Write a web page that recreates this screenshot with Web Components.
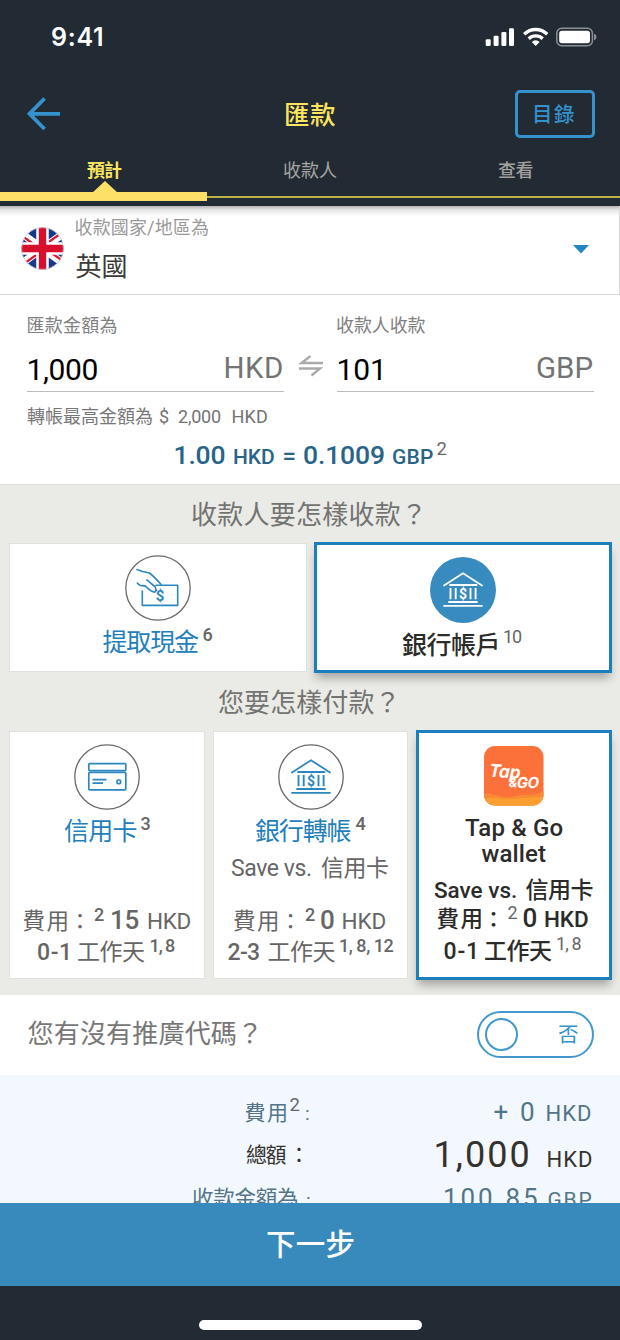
<!DOCTYPE html>
<html lang="zh-Hant">
<head>
<meta charset="utf-8">
<title>匯款</title>
<style>
html,body{margin:0;padding:0;background:#222a33}
body{width:620px;height:1340px;overflow:hidden;font-family:Roboto,"Noto Sans CJK TC",sans-serif}
</style>
</head>
<body>
<remit-app></remit-app>
<script>
const FAMILY = 'Roboto,"Noto Sans CJK TC",sans-serif';
const define = (name, html) => customElements.define(name, class extends HTMLElement {
  constructor() {
    super();
    const t = document.createElement('template');
    t.innerHTML = html;
    this.attachShadow({mode: 'open'}).append(t.content.cloneNode(true));
  }
});
const pen = document.createElement('canvas').getContext('2d');

/* Text run whose box hugs its ink: s = size, w = ink width, g = gap before, up = raise, wt = weight, c = colour */
customElements.define('ui-text', class extends HTMLElement {
  connectedCallback() {
    if (this.shadowRoot) return;
    const a = (n, d) => this.hasAttribute(n) ? this.getAttribute(n) : d;
    const s = +a('s', 18), w = +a('w', 0), wt = a('wt', 400), fam = a('f', FAMILY);
    const text = this.textContent;
    pen.font = `${wt} ${s}px ${fam}`;
    const m = pen.measureText(text);
    const ink = m.actualBoundingBoxRight + m.actualBoundingBoxLeft;
    const n = [...text].length;
    const ls = w && n > 1 ? (w - ink) / (n - 1) : 0;
    this.attachShadow({mode: 'open'}).innerHTML = `<style>
      :host{display:block;flex:none;width:${w || ink}px;margin-left:${a('g', 0)}px;font:${wt} ${s}px/1 ${fam};color:${a('c', 'inherit')};white-space:pre}
      span{margin-left:${m.actualBoundingBoxLeft}px;letter-spacing:${ls}px;vertical-align:${a('up', 0)}px}
      </style><span><slot></slot></span>`;
  }
});

/* Row with a fixed baseline: h = height, b = baseline from the top, p = left inset */
customElements.define('ui-row', class extends HTMLElement {
  connectedCallback() {
    if (this.shadowRoot) return;
    const a = n => this.getAttribute(n) || 0;
    this.attachShadow({mode: 'open'}).innerHTML = `<style>
      :host{display:flex;align-items:baseline;box-sizing:border-box;flex:none;height:${a('h')}px;padding-left:${a('p')}px}
      i{width:0;height:${a('b')}px;flex:none}</style><i></i><slot></slot>`;
  }
});

define('status-bar', `<style>:host{display:flex;height:76px}ui-row{width:485px}svg{margin-top:27px}</style>
<ui-row h="76" b="46" p="52"><ui-text s="25" w="50" wt="600" f="Inter,sans-serif" c="#fff">9:41</ui-text></ui-row>
<svg width="113" height="20" viewBox="0 0 113 20" fill="#fff">
<rect x=".7" y="12.3" width="5" height="6.7" rx="1.2"/><rect x="8.6" y="8.7" width="5" height="10.3" rx="1.2"/><rect x="16.4" y="5" width="5" height="14" rx="1.2"/><rect x="24" y="1.2" width="5" height="17.8" rx="1.2"/>
<g fill="none" stroke="#fff" stroke-width="3.3"><path d="M39.2 7.2a16.4 16.4 0 0 1 23 0"/><path d="M43.7 11.8a10 10 0 0 1 14 0"/></g><path d="M46.8 14.9a5.6 5.6 0 0 1 7.8 0L50.7 19z"/>
<rect x="71.8" y="1.3" width="35.6" height="17.4" rx="5" fill="none" stroke="#8b9096" stroke-width="1.5"/><rect x="74.2" y="3.7" width="30.8" height="12.6" rx="2.8"/><path d="M109 6.8c3.2 1 3.2 5.400 0 6.500z" fill="#8b9096"/></svg>`);

define('nav-bar', `<style>:host{display:flex;height:76px}svg{margin:21px 0 0 26px}.t{width:474px}.m{margin:14px 0 0 -20.500px;box-sizing:border-box;width:80px;height:48px;border:3px solid #3592cc;border-radius:5px}</style>
<svg width="35" height="34" viewBox="0 0 35 34" fill="none" stroke="#3592cc" stroke-width="3.8"><path d="M34 16.800H4M18.600 1.500L3.500 16.800l15.100 15.200"/></svg>
<ui-row class="t" h="76" b="47.500" p="225"><ui-text s="25.500" w="49" wt="500" c="#fbe45f">匯款</ui-text></ui-row>
<div class="m"><ui-row h="42" b="29" p="17.500"><ui-text s="20.500" w="39" wt="500" c="#3592cc">目錄</ui-text></ui-row></div>`);

define('tab-strip', `<style>:host{display:block;height:54px}.l{display:flex;height:29px}.l ui-row{width:206px}
.tri{height:11px;padding-left:92px;display:block}.b{height:9px;display:flex;align-items:flex-start}.b i{width:207px;height:9px;background:#fde067}.b b{flex:1;height:2px;margin-top:4px;background:#bfb449}</style>
<div class="l"><ui-row h="29" b="25" p="87"><ui-text w="35" wt="600" c="#fbe45f">預計</ui-text></ui-row><ui-row h="29" b="25" p="78"><ui-text w="53" c="#a6a6a4">收款人</ui-text></ui-row><ui-row h="29" b="25" p="86"><ui-text w="34.500" wt="500" c="#a0a09e">查看</ui-text></ui-row></div>
<svg class="tri" width="26" height="11" viewBox="0 0 26 11"><path d="M0 12L13 0l13 12z" fill="#fde067"/></svg>
<div class="b"><i></i><b></b></div>`);

define('uk-flag', `<style>:host{display:block;width:43px;height:43px}svg{display:block}</style>
<svg width="43" height="43" viewBox="-21.500 -21.500 43 43"><clipPath id="c"><circle r="21"/></clipPath><g clip-path="url(#c)">
<rect x="-22" y="-22" width="44" height="44" fill="#143a8c"/>
<path d="M-26-18.500L26 18.500M26-18.500L-26 18.500" stroke="#fff" stroke-width="7.500"/>
<path d="M-26-16.500L0 2M26-20.500L0-2M26 16.500L0-2M-26 20.500L0 2" stroke="#dc1730" stroke-width="2.300"/>
<path d="M0-22V22M-22 0H22" stroke="#fff" stroke-width="12.500"/><path d="M0-22V22M-22 0H22" stroke="#d80f2c" stroke-width="7.400"/></g><circle r="20.800" fill="none" stroke="#d5d5dd" stroke-width=".6"/></svg>`);

define('country-select', `<style>:host{display:flex;box-sizing:border-box;height:89px;border-bottom:1.500px solid #d8d8d8;border-right:1px solid #d8d8d8;background:linear-gradient(#b5b3b5,#e6e6e6 4px,#fff 10px)}
uk-flag{margin:21px 0 0 20.500px}.t{flex:1;padding-left:12px}svg{margin:39px 30px 0 0}</style>
<uk-flag></uk-flag><div class="t"><ui-row h="34" b="28"><ui-text w="132.500" c="#999">收款國家/地區為</ui-text></ui-row><ui-row h="50" b="36"><ui-text s="26" w="50" c="#3a3a38">英國</ui-text></ui-row></div>
<svg width="16" height="9" viewBox="0 0 16 9"><path d="M0 0h16L8 8.500z" fill="#2386c4"/></svg>`);

define('amount-form', `<style>:host{display:block;box-sizing:border-box;height:190px;background:#fff;color:#737373;border-bottom:1px solid #dedede}
.g{display:grid;grid-template-columns:257px 53px 257px;padding-left:27px}.f{border-bottom:1.500px solid #bcbcbc}svg{margin:60px 0 0 14px}</style>
<div class="g"><div class="f"><ui-row h="40" b="37" p=".5"><ui-text w="89" c="#808080">匯款金額為</ui-text></ui-row><ui-row h="56" b="45" p="1.500"><ui-text s="30" w="69" c="#000">1,000</ui-text><ui-text s="29.500" w="56.500" g="128" up="2">HKD</ui-text></ui-row></div>
<svg width="26" height="23" viewBox="0 0 26 23" fill="none" stroke="#aaa" stroke-width="2.400"><path d="M25 8H3.500L12.500 1M1 13.500H22L13.500 20.500"/></svg>
<div class="f"><ui-row h="40" b="37"><ui-text w="88.500" c="#808080">收款人收款</ui-text></ui-row><ui-row h="56" b="45" p="1.500"><ui-text s="30" w="42.500" c="#000">101</ui-text><ui-text s="29.500" w="55.500" g="156" up="2">GBP</ui-text></ui-row></div></div>
<ui-row h="40" b="31" p="27"><ui-text w="125" c="#777">轉帳最高金額為</ui-text><ui-text w="9" g="7">$</ui-text><ui-text w="43" g="10">2,000</ui-text><ui-text w="34.500" g="11.500">HKD</ui-text></ui-row>
<ui-row h="52" b="32" p="175.500" style="color:#286488"><ui-text s="26.500" w="49" wt="500">1.00</ui-text><ui-text s="21" w="40" wt="500" g="9.500">HKD</ui-text><ui-text s="24" w="12" wt="500" g="9.500">=</ui-text><ui-text s="26.500" w="80" wt="500" g="8.500">0.1009</ui-text><ui-text s="21" w="40" wt="500" g="9">GBP</ui-text><ui-text s="18.500" w="8.500" g="3.500" up="9" c="#666">2</ui-text></ui-row>`);

const CIRCLE = '<circle cx="33" cy="33" r="32.200" fill="#fff" stroke="#6a6a6a" stroke-width="1.300"/>';
const BANK = (c) => `<g fill="none" stroke="${c}" stroke-width="1.800" stroke-linecap="round"><path d="M14 28.600L33 16.200l19 12.400M20 28h26.500M19 45h28M14 48.800h38"/><path stroke-width="1.900" stroke-linecap="butt" d="M20.500 31v11.300M25.700 31v11.300M40.500 31v11.300M45.600 31v11.300"/></g><text x="33" y="41.800" text-anchor="middle" font-family="Roboto" font-size="14" font-weight="700" fill="${c}">$</text>`;
const icon = (name, body) => define(name, `<style>:host{display:block;width:66px;height:66px}svg{display:block}</style><svg width="66" height="66" viewBox="0 0 66 66">${body}</svg>`);
icon('icon-bank', CIRCLE + BANK('#2b87c0'));
icon('icon-bank-solid', '<circle cx="33" cy="33" r="33" fill="#378bbf"/>' + BANK('#fff'));
icon('icon-cash', CIRCLE + `<g fill="none" stroke="#2b87c0" stroke-width="1.600" stroke-linejoin="round" stroke-linecap="round"><path d="M12 14.500l5.500 2 7 1.500c4 3 8 7.500 11.500 11.300"/><path d="M31 30.200h21.700v20.200H17.300V36"/><path d="M12.300 28c2 2 2.500 3 4.500 2.700 3-.5 4 .3 5.500 2 2.500 2.700 4.500 4.200 7.500 4.600.8-.8 1-1.500.8-2.500"/><path d="M21.700 25c3.500 2 5 4.500 8.300 6.500.8 1.500 0 2.500 1.500 4"/></g><text x="35" y="46" text-anchor="middle" font-family="Roboto" font-size="15" font-weight="700" fill="#2b87c0">$</text>`);
icon('icon-card', CIRCLE + `<g fill="none" stroke="#2b87c0" stroke-width="1.700"><rect x="14.800" y="19.600" width="37" height="7" rx="1"/><rect x="14.800" y="28.400" width="37" height="17.400" rx="1"/><path d="M18.500 35.600h14M18.500 39.200h10.500"/><rect x="43" y="36" width="3.600" height="3.600" rx="1"/></g>`);
define('icon-tapgo', `<style>:host{display:block;width:60px;height:60px}svg{display:block}</style><svg width="60" height="60" viewBox="0 0 60 60"><clipPath id="r"><rect width="59.500" height="59.500" rx="11"/></clipPath><g clip-path="url(#r)"><rect width="60" height="60" fill="#fb7139"/>
<path d="M0 48c7-2 13 2 20 3 10 1 15-3 23-2 6 0 11-1 17-4v15H0z" fill="#f98b35"/><path d="M0 53c10-3 19 1 28 0 12-1 21-2 32-2v9H0z" fill="#fb9f31"/></g>
<g fill="#fff" stroke="#fff" stroke-width=".3" font-family="Inter,sans-serif" font-weight="600" font-style="italic"><text font-size="17.500" textLength="31" lengthAdjust="spacingAndGlyphs" transform="translate(5 30.500) rotate(4)">Tap</text><text font-size="12" x="25" y="41">&amp;</text><text font-size="14.500" textLength="22" lengthAdjust="spacingAndGlyphs" x="33" y="42">GO</text></g></svg>`);

/* Option card; the "on" attribute marks the selected one */
define('option-card', `<style>:host{display:block;box-sizing:border-box;background:#fff;box-shadow:0 0 0 1px #e0e0dc;color:#666}
:host([on]){box-shadow:inset 0 0 0 3px #1b7fbe,0 7px 9px -2px rgba(0,0,0,.3);color:#2b2b29}.i{display:flex;justify-content:center}</style>
<div class="i"><slot name="icon"></slot></div><slot></slot>`);

define('receive-options', `<style>:host{display:flex;height:131px;padding-left:10px}.a{width:296px;height:127.500px;margin-top:1.500px}.b{width:298px;height:130.500px;margin-left:8px}.a [slot]{margin-top:11.500px}.b [slot]{margin-top:15px}</style>
<option-card class="a"><icon-cash slot="icon"></icon-cash><ui-row h="49" b="30" p="92.500"><ui-text s="25" w="96.500" c="#1f80bb">提取現金</ui-text><ui-text s="18" w="8.500" wt="500" g="4.500" up="10">6</ui-text></ui-row></option-card>
<option-card class="b" on><icon-bank-solid slot="icon"></icon-bank-solid><ui-row h="49" b="30.500" p="88"><ui-text s="25" w="95.500" wt="500">銀行帳戶</ui-text><ui-text s="18" w="18" g="6.500" up="10.500" c="#666">10</ui-text></ui-row></option-card>`);

define('pay-options', `<style>:host{display:flex;height:250px;padding-left:10px}option-card{width:194px;height:246px;margin:1.500px 10px 0 0}option-card[on]{width:196px;height:250px;margin:0 0 0 -1px}option-card [slot]{margin-top:12px}option-card[on] [slot]{margin-top:16px}.m{width:193px}</style>
<option-card><icon-card slot="icon"></icon-card>
<ui-row h="90" b="30.500" p="54"><ui-text s="25" w="72.500" c="#1f80bb">信用卡</ui-text><ui-text s="18" w="8.500" wt="500" g="4" up="10">3</ui-text></ui-row>
<ui-row h="36" b="29.500" p="13.500"><ui-text s="22.500" w="43">費用</ui-text><ui-text s="22" w="4" g="11.500">：</ui-text><ui-text s="18" w="8.500" wt="500" g="12" up="8.500">2</ui-text><ui-text s="26" w="26.500" wt="500" g="9.500">15</ui-text><ui-text s="22.500" w="42.500" g="9.500">HKD</ui-text></ui-row>
<ui-row h="36" b="24" p="28"><ui-text s="23" w="30" wt="500">0-1</ui-text><ui-text s="23" w="67" g="10">工作天</ui-text><ui-text s="18" w="24.500" wt="500" g="5.500" up="8">1, 8</ui-text></ui-row></option-card>
<option-card class="m"><icon-bank slot="icon"></icon-bank>
<ui-row h="40" b="30.500" p="41"><ui-text s="25" w="96.500" c="#1f80bb">銀行轉帳</ui-text><ui-text s="18" w="9" wt="500" g="4" up="10">4</ui-text></ui-row>
<ui-row h="50" b="26" p="17"><ui-text s="23" w="80">Save vs.</ui-text><ui-text s="23" w="67" g="10">信用卡</ui-text></ui-row>
<ui-row h="36" b="29.500" p="20"><ui-text s="22.500" w="43">費用</ui-text><ui-text s="22" w="4" g="11.500">：</ui-text><ui-text s="18" w="8.500" wt="500" g="12.500" up="8.500">2</ui-text><ui-text s="26" w="12.500" wt="500" g="7.500">0</ui-text><ui-text s="22.500" w="43" g="9">HKD</ui-text></ui-row>
<ui-row h="36" b="24" p="13.500"><ui-text s="23" w="31.500" wt="500">2-3</ui-text><ui-text s="23" w="67" g="9.500">工作天</ui-text><ui-text s="18" w="53.500" wt="500" g="4.500" up="8">1, 8, 12</ui-text></ui-row></option-card>
<option-card on><icon-tapgo slot="icon"></icon-tapgo>
<ui-row h="36" b="30" p="49"><ui-text s="24" w="97.500" wt="500">Tap &amp; Go</ui-text></ui-row>
<ui-row h="28" b="20" p="65.500"><ui-text s="24" w="64.500" wt="500">wallet</ui-text></ui-row>
<ui-row h="32" b="28" p="18"><ui-text s="22.500" w="82" wt="500">Save vs.</ui-text><ui-text s="23" w="67" wt="500" g="9.500">信用卡</ui-text></ui-row>
<ui-row h="31" b="25" p="21.500"><ui-text s="22.500" w="44" wt="500">費用</ui-text><ui-text s="22" w="4" wt="500" g="10">：</ui-text><ui-text s="18" w="8.500" g="12" up="8.500" c="#666">2</ui-text><ui-text s="26" w="12.500" wt="500" g="7.500">0</ui-text><ui-text s="22.500" w="43" wt="500" g="9">HKD</ui-text></ui-row>
<ui-row h="36" b="25.500" p="28.500"><ui-text s="23" w="30.500" wt="500">0-1</ui-text><ui-text s="23" w="67" wt="500" g="10">工作天</ui-text><ui-text s="18" w="24.500" g="5" up="9" c="#666">1, 8</ui-text></ui-row></option-card>`);

define('options-panel', `<style>:host{display:block;height:510px;background:#eaebe6;color:#737371}</style>
<ui-row h="57" b="39" p="192"><ui-text s="26" w="229">收款人要怎樣收款？</ui-text></ui-row><receive-options></receive-options>
<ui-row h="57" b="39" p="218"><ui-text s="26" w="176.500">您要怎樣付款？</ui-text></ui-row><pay-options></pay-options>`);

define('promo-toggle', `<style>:host{display:flex;height:80px;background:#fff;color:#777}.l{width:477px}.t{box-sizing:border-box;display:flex;width:117px;height:47px;margin-top:16px;border:2px solid #4098cd;border-radius:24px}.k{box-sizing:border-box;width:33px;height:33px;border:2px solid #4098cd;border-radius:50%;margin:5px 0 0 6px}</style>
<ui-row class="l" h="80" b="48" p="27.500"><ui-text s="26" w="229.500">您有沒有推廣代碼？</ui-text></ui-row>
<div class="t"><div class="k"></div><ui-row h="43" b="28.500" p="40"><ui-text s="20.500" w="19" c="#3592cc">否</ui-text></ui-row></div>`);

define('fee-summary', `<style>:host{display:block;height:128px;overflow:hidden;background:#f3f8fe;color:#527589}</style>
<ui-row h="60" b="46" p="245.500"><ui-text s="21" w="40.500" up="1">費用</ui-text><ui-text s="18.500" w="8.500" g="3.500" up="10" c="#666">2</ui-text><ui-text s="19" w="2.500" g="8" up="1">:</ui-text><ui-text s="26" w="14.500" g="185">+</ui-text><ui-text s="26" w="13.500" g="13">0</ui-text><ui-text s="22" w="44.500" g="12">HKD</ui-text></ui-row>
<ui-row h="43" b="31.500" p="246" style="color:#333230"><ui-text s="21" w="40.500" up="5">總額</ui-text><ui-text s="21" w="3.500" g="10" up="5">：</ui-text><ui-text s="36" w="92" g="136.500">1,000</ui-text><ui-text s="22" w="44.500" g="19">HKD</ui-text></ui-row>
<ui-row h="40" b="29" p="193"><ui-text s="21.500" w="105" up="1">收款金額為</ui-text><ui-text s="19" w="2.500" g="9">:</ui-text><ui-text s="26" w="92" g="135.500">100.85</ui-text><ui-text s="21" w="43" g="11.500">GBP</ui-text></ui-row>`);

define('next-button', `<style>:host{display:block;height:83px;background:#378abb;color:#fff}</style><ui-row h="83" b="52" p="267"><ui-text s="29.500" w="86.500" wt="500">下一步</ui-text></ui-row>`);
define('home-indicator', `<style>:host{display:block;box-sizing:border-box;height:54px;padding:34px 0 0 199px}i{display:block;width:223px;height:9.500px;border-radius:5px;background:#fff}</style><i></i>`);
define('remit-app', `<style>:host{display:block;width:620px;height:1340px;overflow:hidden;background:#222a33}</style>
<status-bar></status-bar><nav-bar></nav-bar><tab-strip></tab-strip><country-select></country-select><amount-form></amount-form><options-panel></options-panel><promo-toggle></promo-toggle><fee-summary></fee-summary><next-button></next-button><home-indicator></home-indicator>`);
</script>
</body>
</html>
